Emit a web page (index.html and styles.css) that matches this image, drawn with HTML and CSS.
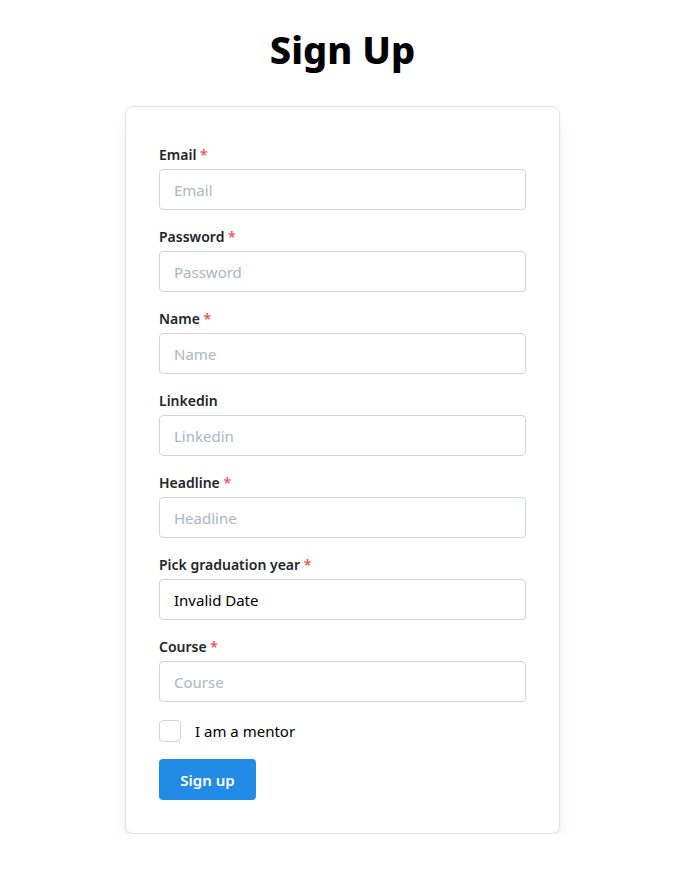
FILE: index.html
```html
<!DOCTYPE html>
<html lang="en">
<head>
<meta charset="utf-8">
<title>Sign Up</title>
<link rel="stylesheet" href="styles.css">
</head>
<body>
<h1 class="title">Sign Up</h1>
<form class="card">
  <div class="field">
    <label class="label">Email <span class="req">*</span></label>
    <input class="input" type="text" placeholder="Email">
  </div>
  <div class="field">
    <label class="label">Password <span class="req">*</span></label>
    <input class="input" type="password" placeholder="Password">
  </div>
  <div class="field">
    <label class="label">Name <span class="req">*</span></label>
    <input class="input" type="text" placeholder="Name">
  </div>
  <div class="field">
    <label class="label">Linkedin</label>
    <input class="input" type="text" placeholder="Linkedin">
  </div>
  <div class="field">
    <label class="label">Headline <span class="req">*</span></label>
    <input class="input" type="text" placeholder="Headline">
  </div>
  <div class="field">
    <label class="label">Pick graduation year <span class="req">*</span></label>
    <div class="input value">Invalid Date</div>
  </div>
  <div class="field">
    <label class="label">Course <span class="req">*</span></label>
    <input class="input" type="text" placeholder="Course">
  </div>
  <label class="check">
    <span class="box"></span>
    <span class="check-text">I am a mentor</span>
  </label>
  <button class="btn" type="button">Sign up</button>
</form>
</body>
</html>
```
FILE: styles.css
```css
* { box-sizing: border-box; }
html, body { margin: 0; padding: 0; background: #fff; }
body {
  font-family: "Noto Sans", "Open Sans", sans-serif;
  color: #212529;
  padding: 23px 0 0 11px;
}
.title {
  margin: 0 0 31px;
  text-align: center;
  font-size: 38px;
  line-height: 52px;
  font-weight: 800;
  color: #000;
}
.card {
  width: 435px;
  margin: 0 auto;
  border: 1px solid #dee2e6;
  border-radius: 8px;
  padding: 37px 33px 33px;
  box-shadow: 0 1px 3px rgba(0,0,0,0.05), 0 14px 20px -6px rgba(0,0,0,0.1), 0 7px 7px -5px rgba(0,0,0,0.06);
  display: flex;
  flex-direction: column;
}
.field {
  display: flex;
  flex-direction: column;
  margin-bottom: 16px;
}
.label {
  font-size: 14px;
  font-weight: 600;
  line-height: 22px;
  margin-bottom: 3px;
  color: #212529;
}
.req { color: #fa5252; }
.input {
  height: 41px;
  width: 100%;
  border: 1px solid #ced4da;
  border-radius: 4px;
  padding: 0 14px;
  font-family: inherit;
  font-size: 15px;
  color: #000;
  outline: none;
  display: flex;
  align-items: center;
}
.input::placeholder { color: #adb5bd; }
.check {
  display: flex;
  align-items: center;
  gap: 14px;
  margin-top: 2px;
  margin-bottom: 17px;
}
.box {
  width: 22px;
  height: 22px;
  border: 1px solid #ced4da;
  border-radius: 4px;
}
.check-text { font-size: 15px; color: #000; }
.btn {
  align-self: flex-start;
  width: 97px;
  height: 41px;
  border: 0;
  border-radius: 4px;
  background: #228be6;
  color: #fff;
  font-family: inherit;
  font-size: 15px;
  font-weight: 600;
}
```
